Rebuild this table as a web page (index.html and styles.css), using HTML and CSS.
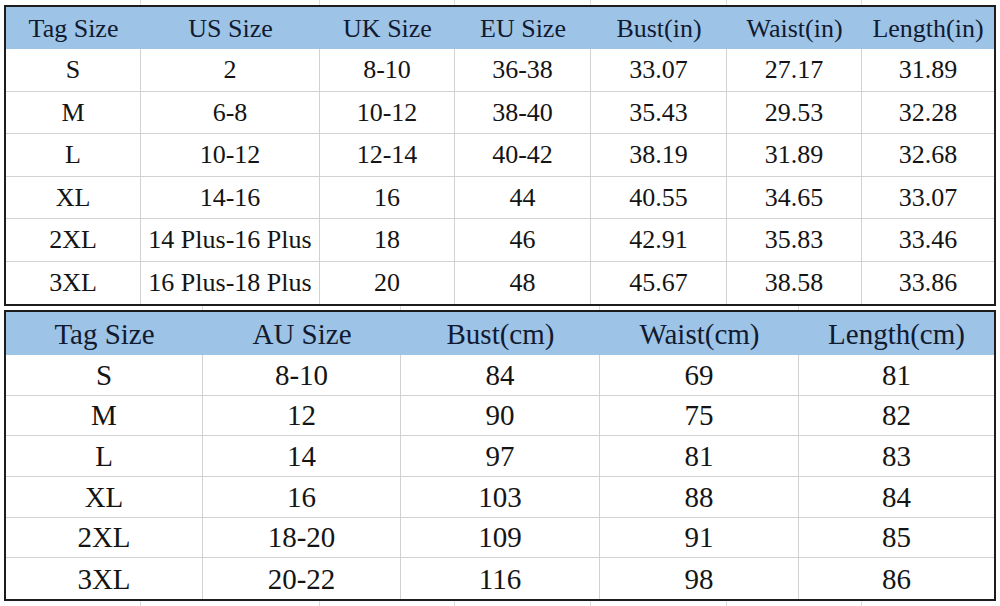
FILE: index.html
```html
<!DOCTYPE html>
<html lang="en">
<head>
<meta charset="utf-8">
<title>Size Chart</title>
<link rel="stylesheet" href="styles.css">
</head>
<body>
<div class="sheet">
  <div class="rim rim-top">
    <span class="g1"></span><span class="g2"></span><span class="g3"></span><span class="g4"></span><span class="g5"></span><span class="g6"></span><span class="g7"></span>
  </div>

  <div class="tbl tbl-in">
    <div class="hd">Tag Size</div><div class="hd">US Size</div><div class="hd">UK Size</div><div class="hd">EU Size</div><div class="hd">Bust(in)</div><div class="hd">Waist(in)</div><div class="hd">Length(in)</div>

    <div class="c">S</div><div class="c">2</div><div class="c">8-10</div><div class="c">36-38</div><div class="c">33.07</div><div class="c">27.17</div><div class="c">31.89</div>
    <div class="c">M</div><div class="c">6-8</div><div class="c">10-12</div><div class="c">38-40</div><div class="c">35.43</div><div class="c">29.53</div><div class="c">32.28</div>
    <div class="c">L</div><div class="c">10-12</div><div class="c">12-14</div><div class="c">40-42</div><div class="c">38.19</div><div class="c">31.89</div><div class="c">32.68</div>
    <div class="c">XL</div><div class="c">14-16</div><div class="c">16</div><div class="c">44</div><div class="c">40.55</div><div class="c">34.65</div><div class="c">33.07</div>
    <div class="c">2XL</div><div class="c">14 Plus-16 Plus</div><div class="c">18</div><div class="c">46</div><div class="c">42.91</div><div class="c">35.83</div><div class="c">33.46</div>
    <div class="c last">3XL</div><div class="c last">16 Plus-18 Plus</div><div class="c last">20</div><div class="c last">48</div><div class="c last">45.67</div><div class="c last">38.58</div><div class="c last">33.86</div>
  </div>

  <div class="rim rim-gap">
    <span class="h1"></span><span class="h2"></span><span class="h3"></span><span class="h4"></span><span class="h5"></span>
  </div>

  <div class="tbl tbl-cm">
    <div class="hd">Tag Size</div><div class="hd">AU Size</div><div class="hd">Bust(cm)</div><div class="hd">Waist(cm)</div><div class="hd">Length(cm)</div>

    <div class="c">S</div><div class="c">8-10</div><div class="c">84</div><div class="c">69</div><div class="c">81</div>
    <div class="c">M</div><div class="c">12</div><div class="c">90</div><div class="c">75</div><div class="c">82</div>
    <div class="c">L</div><div class="c">14</div><div class="c">97</div><div class="c">81</div><div class="c">83</div>
    <div class="c">XL</div><div class="c">16</div><div class="c">103</div><div class="c">88</div><div class="c">84</div>
    <div class="c">2XL</div><div class="c">18-20</div><div class="c">109</div><div class="c">91</div><div class="c">85</div>
    <div class="c last">3XL</div><div class="c last">20-22</div><div class="c last">116</div><div class="c last">98</div><div class="c last">86</div>
  </div>

  <div class="rim rim-bottom">
    <span class="g1"></span><span class="g2"></span><span class="g3"></span><span class="g4"></span><span class="g5"></span><span class="g6"></span><span class="g7"></span>
  </div>
</div>
</body>
</html>
```

FILE: styles.css
```css
html, body {
  margin: 0;
  padding: 0;
  background: #ffffff;
}

body {
  width: 1000px;
  height: 606px;
  overflow: hidden;
  font-family: "Liberation Serif", "Times New Roman", serif;
  color: #141414;
}

.sheet {
  display: flex;
  flex-direction: column;
  padding-left: 4px;
  width: 992px;
}

/* faint spreadsheet gridlines outside the tables */
.rim {
  display: flex;
}
.rim span {
  border-right: 1px solid #dcdcdc;
  box-sizing: border-box;
}
.rim-top { height: 5px; }
.rim-gap { height: 4px; }
.rim-bottom { height: 5px; }

.rim .g1 { width: 137px; }
.rim .g2 { width: 179px; }
.rim .g3 { width: 135px; }
.rim .g4 { width: 136px; }
.rim .g5 { width: 136px; }
.rim .g6 { width: 135px; }
.rim .g7 { width: 134px; border-right: none; }

.rim .h1 { width: 199px; }
.rim .h2 { width: 198px; }
.rim .h3 { width: 199px; }
.rim .h4 { width: 199px; }
.rim .h5 { width: 197px; border-right: none; }

/* tables */
.tbl {
  display: grid;
  border: 2px solid #1c1c1c;
  width: 992px;
  box-sizing: border-box;
  background: #ffffff;
}

.tbl-in {
  grid-template-columns: 135px 179px 135px 136px 136px 135px 132px;
  grid-template-rows: 42px repeat(6, 42.5px);
  font-size: 26px;
}

.tbl-cm {
  grid-template-columns: 197px 198px 199px 199px 195px;
  grid-template-rows: 43px repeat(6, 40.66px);
  font-size: 29px;
}

.hd {
  background: #9dc3e6;
  color: #111a30;
  display: flex;
  align-items: center;
  justify-content: center;
  white-space: nowrap;
  padding-top: 1px;
}

.c {
  display: flex;
  align-items: center;
  justify-content: center;
  white-space: nowrap;
  border-right: 1px solid #d2d2d2;
  border-bottom: 1px solid #d2d2d2;
  box-sizing: border-box;
  padding-top: 1px;
}

.tbl-in .c:nth-child(7n) { border-right: none; }
.tbl-cm .c:nth-child(5n) { border-right: none; }
.c.last { border-bottom: none; }
```
